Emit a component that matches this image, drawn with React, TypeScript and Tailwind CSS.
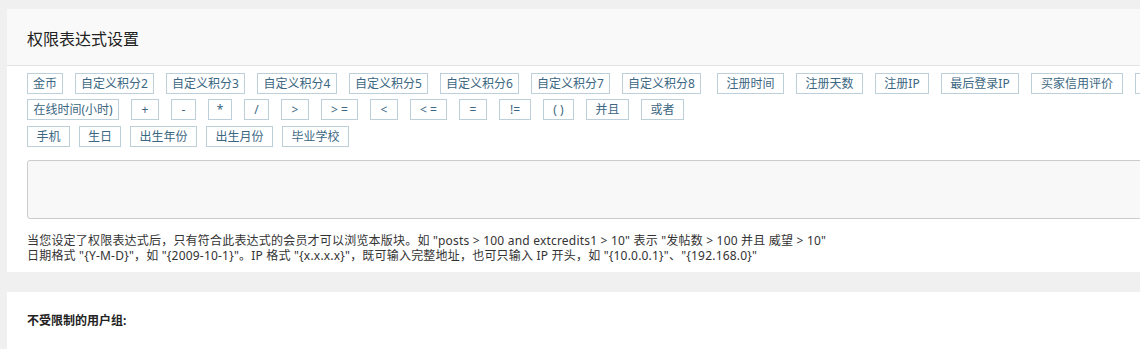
const font = { fontFamily: '"Noto Sans", "Noto Sans CJK SC", sans-serif' }

type Tag = { label: string; w: string; extra?: string }

const row1: Tag[] = [
    { label: "金币", w: "w-[36px]" },
    { label: "自定义积分2", w: "w-[79px]" },
    { label: "自定义积分3", w: "w-[79px]" },
    { label: "自定义积分4", w: "w-[80px]" },
    { label: "自定义积分5", w: "w-[79px]" },
    { label: "自定义积分6", w: "w-[79px]" },
    { label: "自定义积分7", w: "w-[79px]" },
    { label: "自定义积分8", w: "w-[79px]" },
    { label: "注册时间", w: "w-[67px]", extra: "ml-[4px]" },
    { label: "注册天数", w: "w-[67px]" },
    { label: "注册IP", w: "w-[54px]" },
    { label: "最后登录IP", w: "w-[78px]" },
    { label: "买家信用评价", w: "w-[92px]" },
    { label: "卖家信用评价", w: "w-[92px]" },
]

const row2: Tag[] = [
    { label: "在线时间(小时)", w: "w-[92px]" },
    { label: "+", w: "w-[28px]" },
    { label: "-", w: "w-[25px]" },
    { label: "*", w: "w-[24px]" },
    { label: "/", w: "w-[25px]" },
    { label: ">", w: "w-[28px]" },
    { label: "> =", w: "w-[37px]" },
    { label: "<", w: "w-[28px]" },
    { label: "< =", w: "w-[37px]" },
    { label: "=", w: "w-[28px]" },
    { label: "!=", w: "w-[32px]" },
    { label: "( )", w: "w-[31px]" },
    { label: "并且", w: "w-[43px]" },
    { label: "或者", w: "w-[43px]" },
]

const row3: Tag[] = [
    { label: "手机", w: "w-[43px]" },
    { label: "生日", w: "w-[42px]" },
    { label: "出生年份", w: "w-[67px]" },
    { label: "出生月份", w: "w-[67px]" },
    { label: "毕业学校", w: "w-[67px]" },
]

const TagButton = ({ tag }: { tag: Tag }) => {
    return <div className={`${tag.w} ${tag.extra ?? ""} shrink-0 h-[21px] border border-[#bdd0d9] bg-white text-[#3b6782] text-[12px] leading-[19px] text-center whitespace-pre`}>
        {tag.label}
    </div>
}

export default function App() {
    return <div className="w-[1140px] h-[349px] overflow-hidden bg-[#f0f0f0] pt-[9px] pl-[7px]" style={font}>
        <div className="w-[1260px] bg-white">
            <div className="h-[57px] bg-[#f9f9f9] border-b border-[#e3e3e3] pl-[20px] pt-[19px]">
                <div className="text-[16px] leading-[22px] text-[#222]">权限表达式设置</div>
            </div>
            <div className="pl-[20px] pt-[7px] pb-[9px]">
                <div className="flex gap-x-[12px]">
                    {row1.map(t => <TagButton key={t.label} tag={t}/>)}
                </div>
                <div className="flex gap-x-[12px] mt-[5px]">
                    {row2.map(t => <TagButton key={t.label} tag={t}/>)}
                </div>
                <div className="flex gap-x-[9px] mt-[6px]">
                    {row3.map(t => <TagButton key={t.label} tag={t}/>)}
                </div>
                <div className="mt-[13px] mr-[20px] h-[59px] bg-[#f8f8f8] border border-[#cccccc] rounded-[3px]"></div>
                <div className="mt-[14px] text-[12px] leading-[15px] tracking-[0.2px] text-[#333]">
                    <div>当您设定了权限表达式后，只有符合此表达式的会员才可以浏览本版块。如 "posts &gt; 100 and extcredits1 &gt; 10" 表示 "发帖数 &gt; 100 并且 威望 &gt; 10"</div>
                    <div>日期格式 "{"{Y-M-D}"}"，如 "{"{2009-10-1}"}"。IP 格式 "{"{x.x.x.x}"}"，既可输入完整地址，也可只输入 IP 开头，如 "{"{10.0.0.1}"}"、"{"{192.168.0}"}"</div>
                </div>
            </div>
        </div>
        <div className="w-[1260px] h-[80px] mt-[20px] bg-white pl-[20px] pt-[21px]">
            <div className="text-[12px] leading-[16px] font-bold text-[#222]">不受限制的用户组:</div>
        </div>
    </div>
}
